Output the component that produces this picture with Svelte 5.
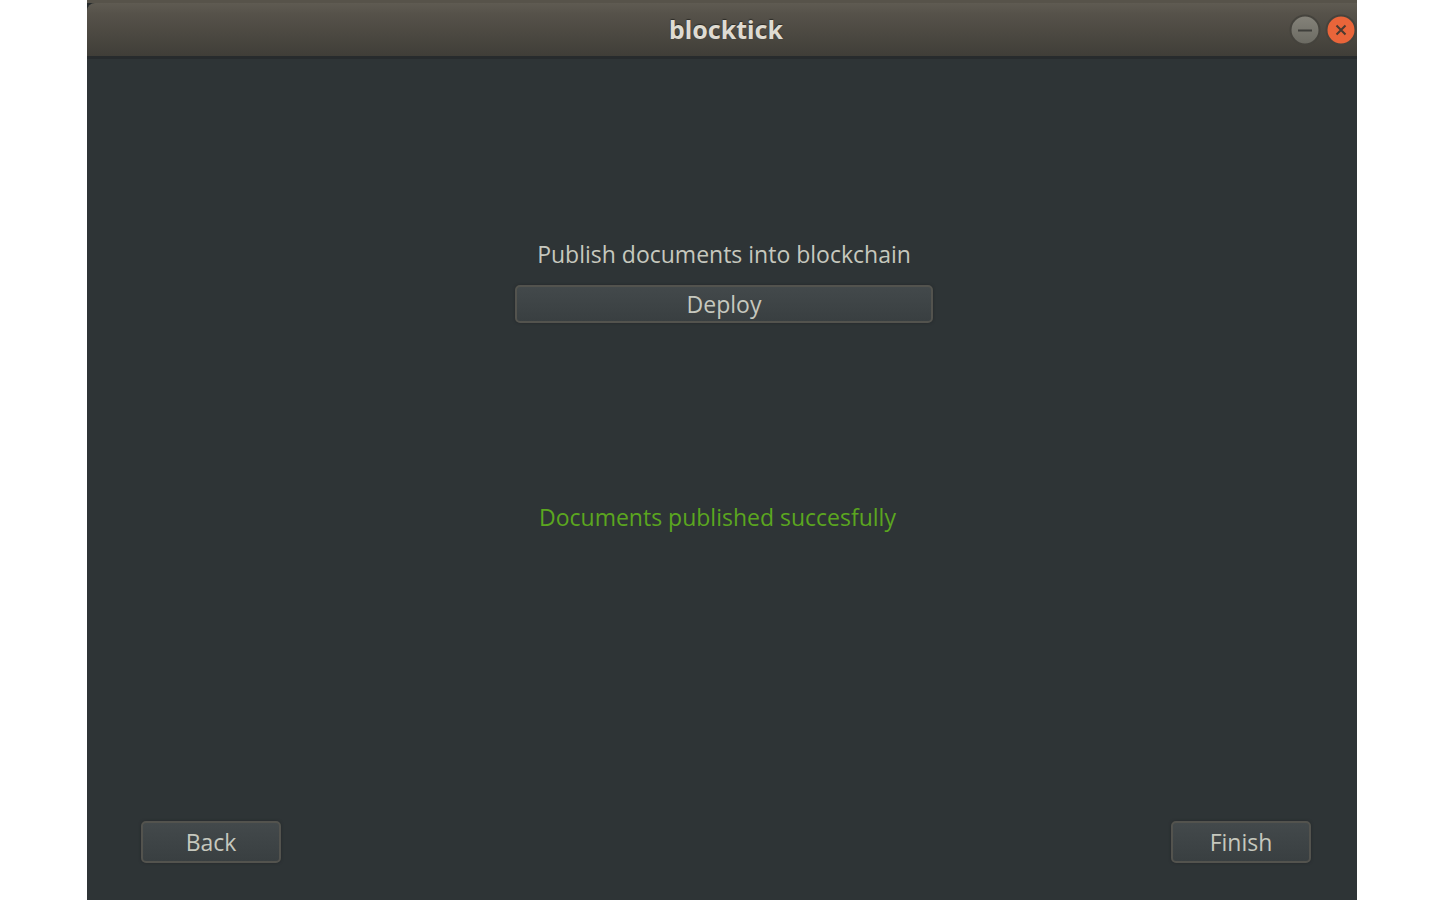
<script>
  let status = $state('Documents published succesfully');

  function deploy() {
    status = 'Documents published succesfully';
  }
</script>

<div class="window">
  <div class="edge">
    <header class="titlebar">
      <h1>blocktick</h1>
      <div class="controls">
        <button class="control" type="button" aria-label="Minimize">
          <svg viewBox="0 0 32 32" aria-hidden="true">
            <defs>
              <linearGradient id="grey" x1="0" y1="0" x2="0" y2="1">
                <stop offset="0" stop-color="#85837a" />
                <stop offset="1" stop-color="#6b6a62" />
              </linearGradient>
            </defs>
            <circle cx="16" cy="16" r="14.500" fill="url(#grey)" stroke="#45433d" stroke-width="2" />
            <path d="M9 16.500H23" stroke="#3f3f3b" stroke-width="2" />
          </svg>
        </button>
        <button class="control" type="button" aria-label="Close">
          <svg viewBox="0 0 32 32" aria-hidden="true">
            <circle cx="16" cy="16" r="14.500" fill="#e9653a" stroke="#45433d" stroke-width="2" />
            <path d="M11.500 11.500L20.500 20.500M20.500 11.500L11.500 20.500" stroke="#4a3a30" stroke-width="2" />
          </svg>
        </button>
      </div>
    </header>
  </div>

  <main>
    <section class="publish">
      <p>Publish documents into blockchain</p>
      <button class="button deploy" type="button" onclick={deploy}>Deploy</button>
      <p class="status" role="status">{status}</p>
    </section>
    <nav>
      <button class="button" type="button">Back</button>
      <button class="button" type="button">Finish</button>
    </nav>
  </main>
</div>

<style>
  :global(body) {
    margin: 0;
    background: #fff;
  }

  .window {
    box-sizing: border-box;
    display: flex;
    flex-direction: column;
    min-height: 100vh;
    margin: 0 83px 0 87px;
    background: #2e3436;
    color: #c6c8be;
    font: 23px/32px "Open Sans", "Noto Sans", sans-serif;
  }

  .edge {
    border-top: 3px solid #57534a;
    background: #252a2b;
  }

  .titlebar {
    box-sizing: border-box;
    display: grid;
    grid-template-columns: 1fr auto 1fr;
    align-items: center;
    height: 56px;
    border-bottom: 3px solid #272b2d;
    border-top-left-radius: 8px;
    background: linear-gradient(#5f5b52, #56524a 20%, #403e38);
  }

  h1 {
    grid-column: 2;
    margin: 0;
    padding: 0 0 2px 8px;
    color: #dfdbd2;
    font-family: "Noto Sans", sans-serif;
    font-size: 25px;
    line-height: 32px;
    text-shadow: 0 -1px 1px #2c2b27;
  }

  .controls {
    display: flex;
    justify-content: flex-end;
    gap: 4px;
  }

  .control {
    width: 32px;
    height: 32px;
    padding: 0;
    border: 0;
    background: none;
  }

  .control svg {
    display: block;
  }

  main {
    display: flex;
    flex: 1;
    flex-direction: column;
    align-items: center;
    padding: 179px 46px 37px 50px;
  }

  p {
    margin: 0;
  }

  .publish {
    display: flex;
    flex-direction: column;
    width: 418px;
    text-align: center;
  }

  .button {
    box-sizing: border-box;
    width: 140px;
    height: 42px;
    padding: 0 0 1px;
    border: 2px solid #53534e;
    border-radius: 5px;
    background: linear-gradient(#43494b, #393f41);
    box-shadow: 0 0 2px 1px #292e30;
    color: inherit;
    font: inherit;
  }

  .deploy {
    width: 100%;
    height: 38px;
    margin-top: 15px;
  }

  .status {
    margin-top: 178px;
    padding-left: 24px;
    color: #5ba61f;
    text-align: left;
  }

  nav {
    box-sizing: border-box;
    display: flex;
    justify-content: space-between;
    width: 100%;
    margin-top: auto;
    padding-left: 4px;
  }
</style>
